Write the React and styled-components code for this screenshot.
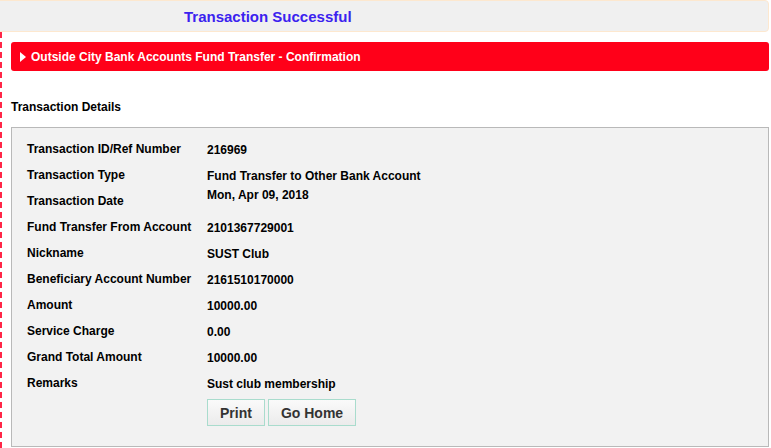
import React from "react";
import styled, { createGlobalStyle } from "styled-components";

const GlobalStyle = createGlobalStyle`
  body {
    margin: 0;
    background: #fff;
    font-family: "Liberation Sans", Arial, Helvetica, sans-serif;
    color: #000;
  }
`;

const details = [
  { label: "Transaction ID/Ref Number", value: "216969" },
  { label: "Transaction Type", value: "Fund Transfer to Other Bank Account" },
  { label: "Transaction Date", value: "Mon, Apr 09, 2018", lift: true },
  { label: "Fund Transfer From Account", value: "2101367729001" },
  { label: "Nickname", value: "SUST Club" },
  { label: "Beneficiary Account Number", value: "2161510170000" },
  { label: "Amount", value: "10000.00" },
  { label: "Service Charge", value: "0.00" },
  { label: "Grand Total Amount", value: "10000.00" },
  { label: "Remarks", value: "Sust club membership" },
];

const App = () => {
  return (
    <>
      <GlobalStyle />
      <Page>
        <Header>
          <HeaderTitle>Transaction Successful</HeaderTitle>
        </Header>
        <Body>
          <TitleBar>
            <Arrow />
            Outside City Bank Accounts Fund Transfer - Confirmation
          </TitleBar>
          <SectionTitle>Transaction Details</SectionTitle>
          <Panel>
            {details.map(d => (
              <Row key={d.label}>
                <Label>{d.label}</Label>
                <Value $lift={d.lift}>{d.value}</Value>
              </Row>
            ))}
            <Actions>
              <Button>Print</Button>
              <Button>Go Home</Button>
            </Actions>
          </Panel>
        </Body>
      </Page>
    </>
  );
};

export default App;

const Page = styled.div`
  width: 771px;
  height: 448px;
  overflow: hidden;
`;

const Header = styled.div`
  height: 32px;
  margin-left: -6px;
  margin-right: 2px;
  background: #f0f0f0;
  border: 1px solid #fde8cf;
  border-radius: 0 4px 4px 0;
  display: flex;
  align-items: center;
  padding-left: 189px;
  box-sizing: border-box;
`;

const HeaderTitle = styled.h1`
  margin: 0;
  font-size: 15px;
  font-weight: bold;
  color: #3b22ef;
`;

const Body = styled.div`
  border-left: 2px dashed #ff2647;
  padding: 10px 2px 0 9px;
  height: 416px;
  box-sizing: border-box;
`;

const TitleBar = styled.div`
  height: 29px;
  background: #ff0019;
  border-radius: 3px;
  color: #fff;
  font-size: 12px;
  font-weight: bold;
  display: flex;
  align-items: center;
  padding-left: 9px;
`;

const Arrow = styled.span`
  width: 0;
  height: 0;
  border-top: 5px solid transparent;
  border-bottom: 5px solid transparent;
  border-left: 6px solid #fff;
  margin-right: 5px;
  margin-top: 1px;
`;

const SectionTitle = styled.div`
  font-size: 12px;
  font-weight: bold;
  margin-top: 29px;
  height: 27px;
`;

const Panel = styled.div`
  background: #f2f2f2;
  border: 1px solid #b9b9b9;
  padding: 13px 0 0 15px;
  height: 320px;
  box-sizing: border-box;
`;

const Row = styled.div`
  display: grid;
  grid-template-columns: 180px 1fr;
  height: 26px;
  font-size: 12px;
  font-weight: bold;
  align-items: start;
`;

const Label = styled.div`
  padding-top: 1px;
`;

const Value = styled.div`
  padding-top: 2px;
  margin-top: ${p => (p.$lift ? "-7px" : "0")};
`;

const Actions = styled.div`
  display: flex;
  gap: 3px;
  margin-left: 180px;
  margin-top: -2px;
`;

const Button = styled.button`
  height: 27px;
  padding: 0 12px;
  font-family: "Liberation Sans", Arial, sans-serif;
  font-size: 14px;
  font-weight: bold;
  color: #333;
  background: linear-gradient(#fafafa, #ebebeb);
  border: 1px solid #a9dccd;
  border-radius: 0;
  cursor: pointer;
`;
